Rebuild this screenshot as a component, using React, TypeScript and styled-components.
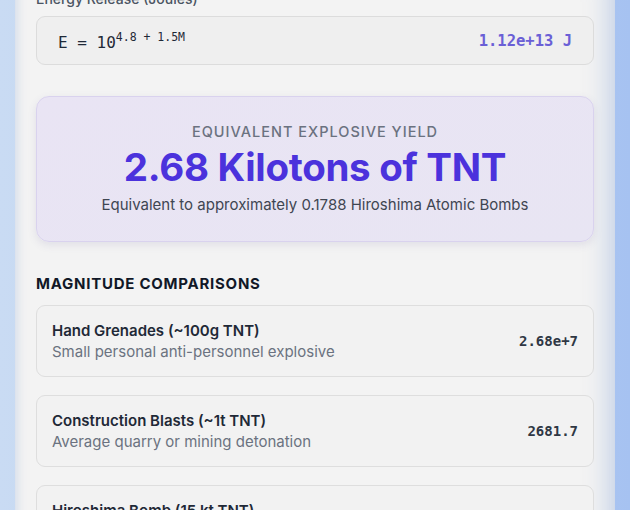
import React from "react";
import styled, { createGlobalStyle } from "styled-components";

const GlobalStyle = createGlobalStyle`
  html, body {
    margin: 0;
    padding: 0;
  }

  body {
    background: linear-gradient(90deg, #c9dbf3 0%, #b8cff2 60%, #a6c2f1 100%);
    font-family: Inter, "Noto Sans", sans-serif;
    overflow: hidden;
  }
`;

const Panel = styled.main`
  margin: -11px 15px 0 15px;
  padding: 0 21px 40px;
  background: #f3f3f3;
  box-shadow:
    inset -22px 0 22px -14px rgba(130, 160, 215, 0.38),
    inset 10px 0 10px -8px rgba(130, 160, 215, 0.3);
  min-height: 560px;
`;

const FieldLabel = styled.div`
  font-size: 14px;
  line-height: 20px;
  color: #4b5563;
  font-weight: 500;
  margin-bottom: 7px;
`;

const FormulaBox = styled.div`
  display: flex;
  align-items: center;
  justify-content: space-between;
  height: 47px;
  padding: 0 21px;
  border: 1px solid #dcdcdc;
  border-radius: 9px;
  background: #efefef;
  font-family: "DejaVu Sans Mono", "Liberation Mono", monospace;
`;

const Formula = styled.span`
  font-size: 16px;
  color: #1f2937;

  sup {
    font-size: 11.5px;
    vertical-align: 7px;
  }
`;

const Joules = styled.span`
  font-size: 15.5px;
  font-weight: 700;
  color: #6a5fd6;
`;

const YieldCard = styled.section`
  margin-top: 31px;
  padding: 26px 20px 26px;
  border: 1px solid #d9d2ee;
  border-radius: 13px;
  background: linear-gradient(160deg, #e9e4f4 0%, #e8e5f3 100%);
  box-shadow: 0 3px 8px rgba(90, 80, 150, 0.12);
  text-align: center;
`;

const YieldLabel = styled.div`
  font-size: 14.5px;
  line-height: 18px;
  letter-spacing: 1px;
  font-weight: 500;
  color: #6b7280;
`;

const YieldValue = styled.div`
  margin-top: 3px;
  font-size: 38.5px;
  line-height: 46px;
  font-weight: 700;
  letter-spacing: -0.3px;
  color: #4b32dc;
`;

const YieldNote = styled.div`
  margin-top: 5px;
  font-size: 15px;
  line-height: 20px;
  color: #3f4652;
`;

const SectionTitle = styled.h3`
  margin: 32px 0 11px;
  font-size: 15px;
  line-height: 20px;
  font-weight: 700;
  letter-spacing: 0.75px;
  color: #111827;
`;

const CompareList = styled.div`
  display: flex;
  flex-direction: column;
  gap: 18px;
`;

const CompareCard = styled.div`
  display: flex;
  align-items: center;
  justify-content: space-between;
  height: 70px;
  padding: 0 15px;
  border: 1px solid #dedede;
  border-radius: 9px;
  background: #f2f2f2;
`;

const CompareText = styled.div`
  display: flex;
  flex-direction: column;
  gap: 1px;
`;

const CompareName = styled.div`
  font-size: 15px;
  line-height: 20px;
  font-weight: 600;
  color: #1f2937;
`;

const CompareDesc = styled.div`
  font-size: 15px;
  line-height: 20px;
  color: #6b7280;
`;

const CompareValue = styled.span`
  font-family: "DejaVu Sans Mono", "Liberation Mono", monospace;
  font-size: 14px;
  font-weight: 700;
  color: #2f3744;
`;

const comparisons = [
  {
    name: "Hand Grenades (~100g TNT)",
    desc: "Small personal anti-personnel explosive",
    value: "2.68e+7",
  },
  {
    name: "Construction Blasts (~1t TNT)",
    desc: "Average quarry or mining detonation",
    value: "2681.7",
  },
  {
    name: "Hiroshima Bomb (15 kt TNT)",
    desc: "Little Boy uranium fission bomb, 1945",
    value: "0.1788",
  },
];

export default function App() {
  return (
    <>
      <GlobalStyle />
      <Panel>
        <FieldLabel>Energy Release (Joules)</FieldLabel>
        <FormulaBox>
          <Formula>
            E = 10<sup>4.8 + 1.5M</sup>
          </Formula>
          <Joules>1.12e+13 J</Joules>
        </FormulaBox>

        <YieldCard>
          <YieldLabel>EQUIVALENT EXPLOSIVE YIELD</YieldLabel>
          <YieldValue>2.68 Kilotons of TNT</YieldValue>
          <YieldNote>
            Equivalent to approximately 0.1788 Hiroshima Atomic Bombs
          </YieldNote>
        </YieldCard>

        <SectionTitle>MAGNITUDE COMPARISONS</SectionTitle>
        <CompareList>
          {comparisons.map((c) => (
            <CompareCard key={c.name}>
              <CompareText>
                <CompareName>{c.name}</CompareName>
                <CompareDesc>{c.desc}</CompareDesc>
              </CompareText>
              <CompareValue>{c.value}</CompareValue>
            </CompareCard>
          ))}
        </CompareList>
      </Panel>
    </>
  );
}
